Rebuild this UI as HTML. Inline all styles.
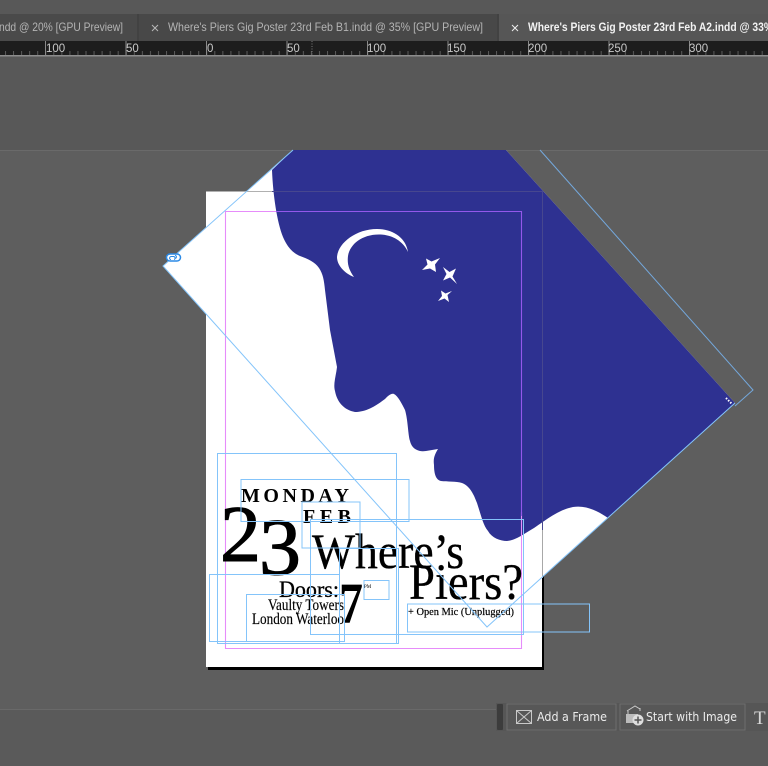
<!DOCTYPE html>
<html><head><meta charset="utf-8"><style>
html,body{margin:0;padding:0;background:#5e5e5e;width:768px;height:766px;overflow:hidden}
svg{display:block;filter:blur(.3px)}
</style></head><body>
<svg width="768" height="766" viewBox="0 0 768 766" xmlns="http://www.w3.org/2000/svg">
<defs>
<pattern id="t1" x="5" y="51" width="8.05" height="4" patternUnits="userSpaceOnUse"><rect width="1" height="4" fill="#5a5a5a"/></pattern>
<pattern id="t2" x="45" y="41" width="80.5" height="14" patternUnits="userSpaceOnUse"><rect width="1" height="14" fill="#8a8a8a"/></pattern>
</defs>
<rect width="768" height="766" fill="#5e5e5e"/>
<rect width="768" height="150" fill="#585858"/>
<rect y="150" width="768" height="1" fill="#6a6a6a"/>
<rect y="709" width="768" height="57" fill="#5a5a5a"/>
<rect y="709" width="768" height="1" fill="#696969"/>

<!-- tabs -->
<rect y="14" width="768" height="27" fill="#484848"/>
<rect x="0" y="14" width="137" height="27" fill="#4a4a4a"/>
<rect x="137" y="14" width="2" height="27" fill="#424242"/>
<rect x="497" y="14" width="2" height="27" fill="#424242"/>
<rect x="499" y="14" width="269" height="27" fill="#565656"/>
<g font-family="'Liberation Sans',sans-serif" font-size="12">
<text x="-1" y="31" fill="#b4b4b4" textLength="124" lengthAdjust="spacingAndGlyphs">ndd @ 20% [GPU Preview]</text>
<text x="168" y="31" fill="#b4b4b4" textLength="315" lengthAdjust="spacingAndGlyphs">Where's Piers Gig Poster 23rd Feb B1.indd @ 35% [GPU Preview]</text>
<text x="528" y="31" fill="#f2f2f2" font-weight="bold" textLength="245" lengthAdjust="spacingAndGlyphs">Where's Piers Gig Poster 23rd Feb A2.indd @ 33%</text>
</g>
<path d="M152 36l6-6M152 30l6 6" transform="translate(0,-5)" stroke="#b8b8b8" stroke-width="1" fill="none"/>
<path d="M512 36l6-6M512 30l6 6" transform="translate(0,-5)" stroke="#eee" stroke-width="1" fill="none"/>

<!-- ruler -->
<rect y="41" width="768" height="14" fill="#1d1d1d"/>
<rect y="51" width="768" height="4" fill="url(#t1)"/>
<rect y="41" width="768" height="14" fill="url(#t2)"/>
<rect y="55" width="768" height="1.5" fill="#8d8d8d"/>
<g font-family="'Liberation Sans',sans-serif" font-size="11.500" fill="#c8c8c8">
<text x="46" y="52">100</text><text x="126" y="52">50</text><text x="207" y="52">0</text><text x="287" y="52">50</text><text x="367" y="52">100</text><text x="447" y="52">150</text><text x="528" y="52">200</text><text x="608" y="52">250</text><text x="689" y="52">300</text>
</g>
<path d="M312 41v14" stroke="#777" stroke-dasharray="1 1.500" fill="none"/>

<!-- page -->
<rect x="208" y="194" width="336" height="476" fill="#000"/>
<rect x="206" y="191" width="336" height="476" fill="#fff"/>

<!-- frame white + blue -->
<path d="M293 150H506L735 403L487 627L163 266Z" fill="#fff"/>
<path d="M293 150L272 170C273 195 277 222 283 237C288 249 295 254 300 256C308 259 315 262 319 268C323 274 324 280 325 290L330 330L337 367C336 376 333 384 335 391C337 402 344 410 355 412C367 412 377 405 385 399C388 396 391 393 394 394C398 396 402 404 405 410C408 420 408 435 410 441C412 450 420 452 426 451L438 449C435 454 433 458 434 465C434 474 436 480 441 481C447 482 456 481 462 483C470 486 474 495 477 503C481 515 483 525 488 531C492 538 500 541 507 541C517 540 525 533 534 528C546 520 558 510 573 507C586 505 598 511 608 518L735 403L506 150Z" fill="#2e3191"/>

<!-- moon -->
<path d="M408 252C403 241 392 234.500 379 234.500C362 234.500 350 244 348 256C347 264 349 270 354 277C344 273 337 265 337 257C338 243 356 229 377 229C393 229 406 238 408 252Z" fill="#fff"/>
<!-- stars -->
<g fill="#fff">
<path d="M440 258L435 264.500L436 272L430 268.500L422 270L427.500 264.500L426 258.500L431.500 261.500Z"/>
<path d="M457 285L452.500 277.500L456 269.500L449.500 273L443 268L446.500 275L443 281.500L450 278.500Z" transform="translate(0,-1)"/>
<path d="M452 291L447.500 295L449 302L444.500 298.500L438 301L442 296L441 290.500L445.500 293.500Z"/>
</g>

<!-- guides over -->
<path d="M225.500 211.500H276M225.500 211V648.500H521.500V512" fill="none" stroke="#e68cfa" stroke-width="1.100"/>
<path d="M276 211.500H521.500V516" fill="none" stroke="#9358ea" stroke-width="1.100"/>
<path d="M272 191.500H542.500V530" fill="none" stroke="#47478f" stroke-width="1"/>
<path d="M206 191.500H272" stroke="#b0b0b0" stroke-width="1"/>
<path d="M542.500 530V578" stroke="#a8a8a8" stroke-width="1"/>

<!-- text -->
<g font-family="'Liberation Serif',serif" fill="#000" stroke="#000">
<text x="241" y="502" font-size="20" font-weight="bold" stroke-width="0" textLength="108">MONDAY</text>
<text x="303" y="523" font-size="20" font-weight="bold" stroke-width="0" textLength="48">FEB</text>
<text x="220" y="561" font-size="80" stroke-width="1.100" textLength="41" lengthAdjust="spacingAndGlyphs">2</text>
<text x="259" y="574" font-size="80" stroke-width="1.100" textLength="42" lengthAdjust="spacingAndGlyphs">3</text>
<text x="312" y="568" font-size="50" stroke-width=".35" textLength="152" lengthAdjust="spacingAndGlyphs">Where’s</text>
<text x="409" y="599" font-size="51" stroke-width=".35" textLength="114" lengthAdjust="spacingAndGlyphs">Piers?</text>
<text x="279" y="597" font-size="23" stroke-width=".3" textLength="60" lengthAdjust="spacingAndGlyphs">Doors:</text>
<text x="339" y="623" font-size="58" font-weight="bold" stroke-width="0" textLength="24" lengthAdjust="spacingAndGlyphs">7</text>
<text x="364" y="588" font-size="5" stroke-width="0">PM</text>
<text x="268" y="610" font-size="16" stroke-width=".15" textLength="76" lengthAdjust="spacingAndGlyphs">Vaulty Towers</text>
<text x="252" y="624" font-size="16" stroke-width=".15" textLength="92" lengthAdjust="spacingAndGlyphs">London Waterloo</text>
<text x="408" y="615" font-size="11" stroke-width=".2" textLength="106" lengthAdjust="spacingAndGlyphs">+ Open Mic (Unplugged)</text>
</g>

<!-- frame edges -->
<g fill="none" stroke="#84c4fa" stroke-width="1">
<path d="M293 150L163 266L487 627L735 403"/>
<path d="M540 150L753 390L735 406" stroke="#74a8dc"/>
<rect x="217.500" y="453.500" width="179" height="190"/>
<rect x="241" y="479.500" width="168" height="42"/>
<rect x="302" y="502" width="58" height="46"/>
<rect x="310.500" y="519.500" width="213" height="115"/>
<rect x="209.500" y="574.500" width="130" height="67"/>
<rect x="246.500" y="594.500" width="98" height="47"/>
<rect x="339.500" y="548.500" width="59" height="95"/>
<rect x="364" y="580.500" width="25" height="19"/>
<rect x="407.500" y="604" width="182" height="28"/>
</g>

<!-- link icon -->
<rect x="166.500" y="254" width="14" height="7" rx="3.500" fill="#fff" stroke="#2b8ae6" stroke-width="1.500"/>
<path d="M171 259.500c-2 0-2-3 .5-3h2c2 0 2 3 .5 3M175 255.500c2 0 2 3-.5 3" fill="none" stroke="#2b8ae6" stroke-width="1"/>
<path d="M726 398l6 6" stroke="#fff" stroke-width="2" stroke-dasharray="1.500 1.500"/>

<!-- bottom toolbar -->
<rect x="496" y="703" width="272" height="28" fill="#565656"/>
<rect x="497" y="704" width="6" height="26" rx="1" fill="#3c3c3c"/>
<rect x="507" y="704" width="109" height="26" fill="#575757" stroke="#6e6e6e"/>
<rect x="620" y="704" width="125" height="26" fill="#575757" stroke="#6e6e6e"/>
<g fill="none" stroke="#c9c9c9" stroke-width="1">
<rect x="516.500" y="710.500" width="15" height="13"/>
<path d="M516.500 710.500l15 13M531.500 710.500l-15 13"/>
<path d="M627 711l8-5 5 3M628 711v4M640 708v3"/>
</g>
<rect x="626" y="714" width="12" height="9" fill="#bcbcbc"/>
<circle cx="638" cy="720" r="5.500" fill="#dedede"/>
<path d="M638 716.500v7M634.500 720h7" stroke="#555" stroke-width="1.500"/>
<g font-family="'DejaVu Sans',sans-serif" font-size="12" fill="#ececec">
<text x="537" y="721" textLength="70" lengthAdjust="spacingAndGlyphs">Add a Frame</text>
<text x="646" y="721" textLength="91" lengthAdjust="spacingAndGlyphs">Start with Image</text>
</g>
<text x="754" y="724" font-family="'Liberation Serif',serif" font-size="19" fill="#d8d8d8">T</text>
</svg>
</body></html>
